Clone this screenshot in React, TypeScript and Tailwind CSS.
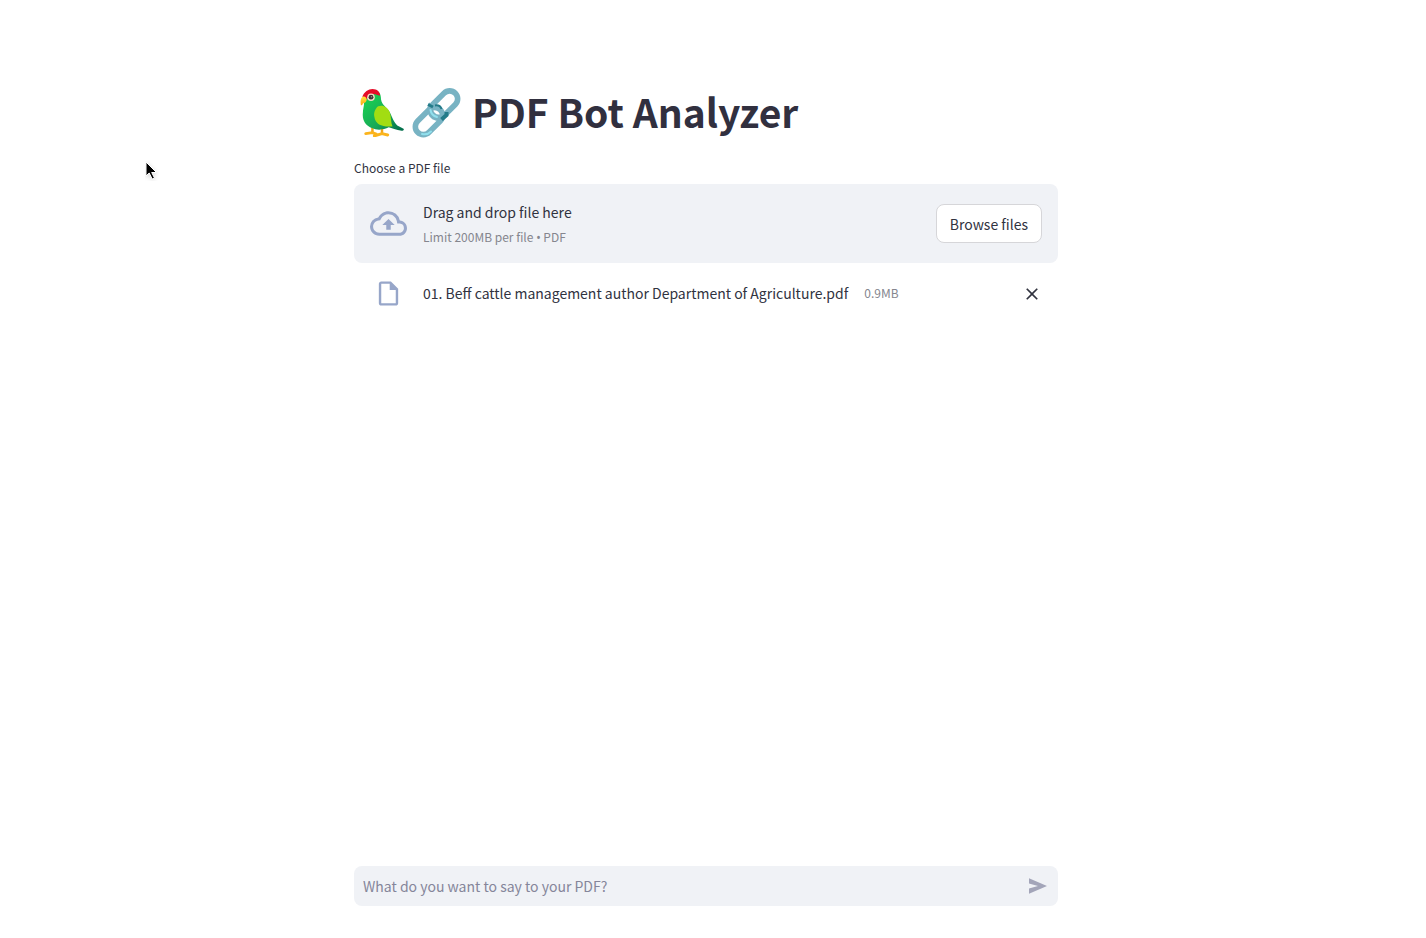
import React from "react";

function Parrot() {
  return (
    <svg viewBox="0 0 46 50" className="h-12 w-11 shrink-0" aria-hidden="true">
      <defs>
        <linearGradient id="body" x1="0" y1="0" x2="1" y2="1">
          <stop offset="0.15" stopColor="#19cf52" />
          <stop offset="0.6" stopColor="#17a957" />
          <stop offset="1" stopColor="#01694a" />
        </linearGradient>
        <linearGradient id="beak" x1="0" y1="0" x2="0" y2="1">
          <stop offset="0" stopColor="#ffe63b" />
          <stop offset="1" stopColor="#fba516" />
        </linearGradient>
      </defs>
      <path d="M13 40v6M23 40v6" stroke="#f2a51c" strokeWidth="2.600" />
      <path d="M6 46.500l7-1 4 1.500M15 49l8-2.500 6 1.500" fill="none" stroke="#fbb41d" strokeWidth="3" strokeLinecap="round" strokeLinejoin="round" />
      <path d="M4 11C4 4 9 1 14 1c6 0 8 4 8 10 1 6 6 8 9 13 3 6 4 10 8 14l6.500 3.500c1 1-.5 2-2 2C38 43 33 41 30 40c-4 2-9 3-14 2C7 40 2 34 3 25c0-5 2-9 1-14z" fill="url(#body)" />
      <path d="M19 18c5-2 10 1 12 6 2 6 1 11 3 15-9 1-18-1-19-10-1-4 1-9 4-11z" fill="#a2dd12" />
      <path d="M2.500 8C4 3 9 0 13 0c5 0 8 3 8 7-4-1-6-3-10-1-2 1-3 3-4 5L2.500 8z" fill="#e50b28" />
      <circle cx="11.500" cy="8.500" r="4" fill="#f5d9c5" />
      <circle cx="11.500" cy="8.500" r="2.500" fill="#3d3533" />
      <circle cx="12" cy="8" r=".8" fill="#9c8b85" />
      <path d="M3 8C.5 9 .3 13 1 17c1 0 2-1 2-2 2 0 4-2 4-4C7 9 5 7 3 8z" fill="url(#beak)" />
    </svg>
  );
}

function ChainLink() {
  return (
    <svg viewBox="0 0 50 50" className="h-[50px] w-[50px] shrink-0" aria-hidden="true">
      <g fill="none">
        <rect x="16" y="8.500" width="32" height="16" rx="8" transform="rotate(-45 32 16.500)" stroke="#78b3c3" strokeWidth="5.600" />
        <rect x="1" y="25" width="32" height="16" rx="8" transform="rotate(-45 17 33)" stroke="#78b3c3" strokeWidth="5.600" />
        <path d="M19.500 16c-2.500 4-1.500 8.500 1.500 11 2.500 2.500 6 3 9 1.500" stroke="#78b3c3" strokeWidth="5.600" />
        <path d="M16 16.500l5 2.500" stroke="#247b89" strokeWidth="3" />
        <path d="M23 17.500c3-.5 5.500.5 6.500 3.500" stroke="#247b89" strokeWidth="2" />
        <path d="M34.500 24v3l-5 4.500" stroke="#247b89" strokeWidth="4" />
        <path d="M18.500 22c.5 3.500 3 6 6.500 7" stroke="#91e0ed" strokeWidth="2" strokeLinecap="round" />
        <path d="M10 46c3 .8 6.500 0 9-2.500" stroke="#91e0ed" strokeWidth="2" strokeLinecap="round" />
      </g>
    </svg>
  );
}

function CloudUpload() {
  return (
    <svg viewBox="0 0 24 24" fill="currentColor" className="h-[37px] w-[37px]" aria-hidden="true">
      <path d="M19.350 10.040A7.490 7.490 0 0 0 12 4C9.110 4 6.600 5.640 5.350 8.040A5.994 5.994 0 0 0 0 14c0 3.310 2.690 6 6 6h13c2.760 0 5-2.240 5-5 0-2.640-2.050-4.780-4.650-4.960zM19 18H6c-2.210 0-4-1.790-4-4 0-2.050 1.530-3.760 3.560-3.970l1.070-.11.5-.95A5.469 5.469 0 0 1 12 6c2.620 0 4.880 1.860 5.390 4.430l.3 1.500 1.530.11A2.980 2.980 0 0 1 22 15c0 1.650-1.350 3-3 3zM8 13h2.550v3h2.900v-3H16l-4-4z" />
    </svg>
  );
}

function FileIcon() {
  return (
    <svg viewBox="0 0 24 24" fill="currentColor" className="h-[29px] w-[29px]" aria-hidden="true">
      <path d="M14 2H6c-1.100 0-1.990.9-1.990 2L4 20c0 1.100.89 2 1.990 2H18c1.100 0 2-.9 2-2V8l-6-6zM6 20V4h7v5h5v11H6z" />
    </svg>
  );
}

function CloseIcon() {
  return (
    <svg viewBox="0 0 24 24" fill="currentColor" className="h-5 w-5" aria-hidden="true">
      <path d="M19 6.410L17.590 5 12 10.590 6.410 5 5 6.410 10.590 12 5 17.590 6.410 19 12 13.410 17.590 19 19 17.590 13.410 12z" />
    </svg>
  );
}

function SendIcon() {
  return (
    <svg viewBox="0 0 20 20" fill="currentColor" className="h-5 w-5" aria-hidden="true">
      <path d="M1 2.300 19 10 1 17.700V12.500L10 10 1 7.500z" />
    </svg>
  );
}

function Pointer() {
  return (
    <svg viewBox="0 0 14 20" className="pointer-events-none absolute top-[161px] left-[145px] h-5 w-3.5" aria-hidden="true">
      <path d="M1 1v14l3.200-3 3 6 2.300-1-2.800-5.500h4.800z" fill="#000" stroke="#fff" strokeWidth="1" className="drop-shadow-sm" />
    </svg>
  );
}

export default function App() {
  return (
    <div className="relative flex min-h-screen flex-col bg-white pr-3.5 font-['Noto_Sans_CJK_SC','Noto_Sans',sans-serif] text-sm text-[#31333f]">
      <Pointer />
      <main className="mx-auto w-full max-w-[736px] grow px-4 pt-20">
        <h1 className="flex items-center gap-2 pt-2 pl-1.5 text-[39px] leading-[46px] font-bold text-[#31303f]">
          <Parrot />
          <ChainLink />
          <span className="pb-1 pl-0.5">PDF Bot Analyzer</span>
        </h1>
        <label htmlFor="pdf" className="mt-5 block text-xs leading-5">
          Choose a PDF file
        </label>
        <input id="pdf" type="file" accept=".pdf" className="hidden" />
        <section className="mt-1.5 flex items-center gap-4 rounded-lg bg-[#f0f2f6] px-4 py-4">
          <span className="text-[#97a6c9]">
            <CloudUpload />
          </span>
          <div className="flex grow flex-col gap-[3px]">
            <p className="leading-6">Drag and drop file here</p>
            <p className="text-xs leading-5 text-[#85868e]">
              Limit 200MB per file <span className="font-['Noto_Sans',sans-serif] leading-none">•</span> PDF
            </p>
          </div>
          <button type="button" className="h-[39px] rounded-lg border border-[#d6d6d9] bg-white px-[13px] leading-6">
            Browse files
          </button>
        </section>
        <ul>
          <li className="flex items-center gap-4 px-4 py-4">
            <span className="flex w-[37px] justify-center text-[#97a6c9]">
              <FileIcon />
            </span>
            <div className="flex grow items-center gap-4 pb-0.5">
              <span className="leading-6">01. Beff cattle management author Department of Agriculture.pdf</span>
              <span className="text-xs leading-5 text-[#85868e]">0.9MB</span>
            </div>
            <button type="button" aria-label="Remove file">
              <CloseIcon />
            </button>
          </li>
        </ul>
      </main>
      <footer className="mx-auto w-full max-w-[736px] px-4 pb-8">
        <form className="flex items-center rounded-lg bg-[#f0f2f6] pr-2.5 pl-[9px]" onSubmit={(e) => e.preventDefault()}>
          <input
            type="text"
            aria-label="Message"
            placeholder="What do you want to say to your PDF?"
            className="h-10 min-w-0 grow bg-transparent leading-6 outline-none placeholder:text-[#85869a]"
          />
          <button type="submit" aria-label="Send" className="text-[#a3a5b9]">
            <SendIcon />
          </button>
        </form>
      </footer>
    </div>
  );
}
